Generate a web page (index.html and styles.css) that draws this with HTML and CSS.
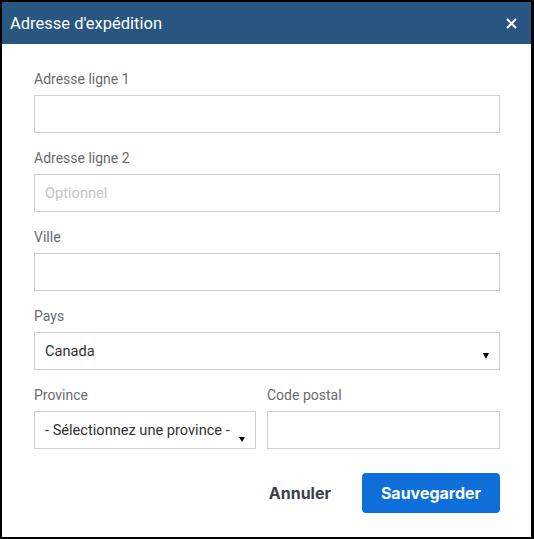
FILE: index.html
```html
<!DOCTYPE html>
<html lang="fr">
<head>
<meta charset="utf-8">
<title>Adresse d'expédition</title>
<link rel="stylesheet" href="styles.css">
</head>
<body>
<div class="dialog">
  <div class="dialog-header">
    <h1 class="dialog-title">Adresse d'expédition</h1>
    <button class="close-btn" aria-label="Fermer">
      <svg width="11" height="11" viewBox="0 0 11 11"><path d="M1 1 L10 10 M10 1 L1 10" stroke="#fff" stroke-width="2" stroke-linecap="butt"/></svg>
    </button>
  </div>
  <form class="dialog-body">
    <div class="field">
      <label class="field-label">Adresse ligne 1</label>
      <input class="field-input" type="text">
    </div>
    <div class="field">
      <label class="field-label">Adresse ligne 2</label>
      <input class="field-input" type="text" placeholder="Optionnel">
    </div>
    <div class="field">
      <label class="field-label">Ville</label>
      <input class="field-input" type="text">
    </div>
    <div class="field">
      <label class="field-label">Pays</label>
      <div class="select-wrap">
        <select class="field-input field-select"><option>Canada</option></select>
      </div>
    </div>
    <div class="field-row">
      <div class="field field-province">
        <label class="field-label">Province</label>
        <div class="select-wrap select-wrap-low">
          <select class="field-input field-select"><option>- Sélectionnez une province -</option></select>
        </div>
      </div>
      <div class="field field-postal">
        <label class="field-label">Code postal</label>
        <input class="field-input" type="text">
      </div>
    </div>
    <div class="actions">
      <button type="button" class="btn btn-cancel">Annuler</button>
      <button type="button" class="btn btn-save">Sauvegarder</button>
    </div>
  </form>
</div>
</body>
</html>
```
FILE: styles.css
```css
* { box-sizing: border-box; }
html, body { margin: 0; padding: 0; }
body {
  background: #000;
  font-family: Roboto, "Liberation Sans", Arial, sans-serif;
  padding: 2px 3px 2px 2px;
  height: 539px;
}
.dialog {
  background: #fff;
  height: 535px;
  display: flex;
  flex-direction: column;
}
.dialog-header {
  background: #285680;
  height: 42px;
  display: flex;
  align-items: center;
  justify-content: space-between;
  padding: 1px 14px 0 8px;
}
.dialog-title {
  margin: 0;
  color: #fff;
  font-size: 16.5px;
  font-weight: 400;
  line-height: 20px;
}
.close-btn {
  background: none;
  border: 0;
  padding: 0;
  width: 11px;
  height: 11px;
  display: flex;
  cursor: pointer;
}
.dialog-body {
  margin: 0;
  padding: 25px 31px 24px 32px;
  display: flex;
  flex-direction: column;
  gap: 15px;
  flex: 1;
}
.field {
  display: flex;
  flex-direction: column;
  gap: 6px;
}
.field-label {
  font-size: 14px;
  line-height: 20px;
  color: #6b6b6b;
}
.field-input {
  height: 38px;
  width: 100%;
  border: 1px solid #cfcfcf;
  border-radius: 0;
  background: #fff;
  font-family: Roboto, "Liberation Sans", Arial, sans-serif;
  font-size: 14.6px;
  color: #333;
  padding: 0 10px;
  outline: none;
}
.field-input::placeholder { color: #c4c4c4; }
.field-select {
  appearance: none;
  -webkit-appearance: none;
  padding-right: 18px;
}
.select-wrap { position: relative; }
.select-wrap::after {
  content: "";
  position: absolute;
  right: 11px;
  top: 21px;
  border-left: 3.5px solid transparent;
  border-right: 3.5px solid transparent;
  border-top: 6px solid #000;
  pointer-events: none;
}
.select-wrap-low::after {
  top: 26px;
  border-top-width: 5px;
}
.field-row {
  display: flex;
  gap: 11px;
}
.field-province { width: 222px; }
.field-postal { flex: 1; }
.actions {
  margin-top: 9px;
  display: flex;
  justify-content: flex-end;
  align-items: center;
  gap: 31px;
}
.btn {
  font-family: Inter, Roboto, "Liberation Sans", Arial, sans-serif;
  font-weight: 700;
  font-size: 16px;
  border: 0;
  cursor: pointer;
}
.btn-cancel {
  background: none;
  color: #3a3f47;
  padding: 0;
}
.btn-save {
  background: #0e6fdb;
  color: #fff;
  width: 138px;
  height: 40px;
  border-radius: 4px;
}
```
